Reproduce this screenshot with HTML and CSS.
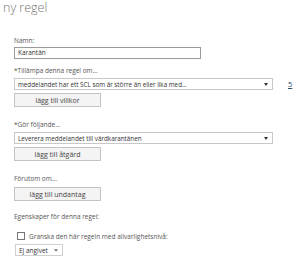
FILE: index.html
```html
<!DOCTYPE html>
<html lang="sv">
<head>
  <meta charset="UTF-8" />
  <title>ny regel</title>
  <link rel="stylesheet" href="styles.css">
</head>
<body>
  <h1 class="title">ny regel</h1>

  <div class="form">
    <div class="group name-group">
      <div class="label">Namn:</div>
      <div class="textbox">Karantän</div>
    </div>

    <div class="group">
      <div class="label">*Tillämpa denna regel om...</div>
      <div class="row">
        <div class="select wide">
          <span>meddelandet har ett SCL som är större än eller lika med...</span>
          <span class="arrow"></span>
        </div>
        <a class="link" href="#">5</a>
      </div>
      <button class="btn">lägg till villkor</button>
    </div>

    <div class="group">
      <div class="label">*Gör följande...</div>
      <div class="select wide">
        <span>Leverera meddelandet till värdkarantänen</span>
        <span class="arrow"></span>
      </div>
      <button class="btn">lägg till åtgärd</button>
    </div>

    <div class="group">
      <div class="label">Förutom om...</div>
      <button class="btn">lägg till undantag</button>
    </div>

    <div class="group props">
      <div class="label">Egenskaper för denna regel:</div>
      <label class="check">
        <span class="box"></span>
        <span>Granska den här regeln med allvarlighetsnivå:</span>
      </label>
      <div class="small-select">
        <span>Ej angivet</span>
        <span class="arrow light"></span>
      </div>
    </div>
  </div>
</body>
</html>
```

FILE: styles.css
```css
body {
  margin: 0;
  padding: 0 3px;
  font-family: 'Open Sans', 'Noto Sans', sans-serif;
  color: #444;
  background: #fff;
}

.title {
  margin: 2px 0 0;
  font-size: 12.5px;
  line-height: 12px;
  font-weight: 300;
  color: #777;
}

.form {
  padding-left: 11px;
  font-size: 6.5px;
}

.group {
  margin-top: 13px;
}

.name-group {
  margin-top: 22px;
}

.name-group + .group {
  margin-top: 7px;
}

.props {
  margin-top: 11px;
}

.label {
  height: 10px;
  line-height: 10px;
  color: #555;
  margin-bottom: 2px;
}

.name-group .label {
  margin-bottom: 1px;
}

.textbox {
  box-sizing: border-box;
  width: 187px;
  height: 12px;
  line-height: 10px;
  border: 1px solid #9a9a9a;
  padding: 0 3px;
  color: #333;
}

.row {
  display: flex;
  align-items: center;
}

.select {
  box-sizing: border-box;
  display: flex;
  align-items: center;
  justify-content: space-between;
  height: 12px;
  border: 1px solid #c8c8c8;
  padding: 0 4px 0 3px;
  font-size: 6.3px;
  color: #333;
}

.wide {
  width: 259px;
}

.arrow {
  width: 0;
  height: 0;
  border-left: 2px solid transparent;
  border-right: 2px solid transparent;
  border-top: 3px solid #333;
}

.arrow.light {
  border-top-color: #888;
}

.link {
  margin-left: 15px;
  color: #2d4f73;
  text-decoration: underline;
  font-size: 7.5px;
}

.btn {
  display: block;
  box-sizing: border-box;
  width: 87px;
  height: 14px;
  margin-top: 3px;
  padding: 0;
  border: 1px solid #c4c4c4;
  background: #f4f4f4;
  font-family: inherit;
  font-size: 7px;
  color: #444;
}

.check {
  display: flex;
  align-items: center;
  gap: 4px;
  margin-top: 9px;
  padding-left: 3px;
  height: 10px;
  color: #555;
}

.box {
  box-sizing: border-box;
  width: 8px;
  height: 8px;
  border: 1px solid #777;
  background: #fff;
}

.small-select {
  box-sizing: border-box;
  display: flex;
  align-items: center;
  justify-content: space-between;
  width: 48px;
  height: 12px;
  margin-top: 3px;
  margin-left: 1px;
  padding: 0 4px 0 3px;
  border: 1px solid #d0d0d0;
  white-space: nowrap;
  color: #333;
}
```
